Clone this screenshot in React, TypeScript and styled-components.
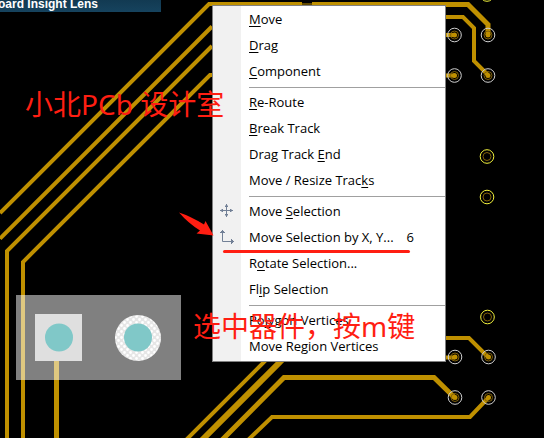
import React from "react";
import styled, { createGlobalStyle } from "styled-components";

const GlobalStyle = createGlobalStyle`
  * { box-sizing: border-box; }
  body { margin: 0; background: #000; overflow: hidden; }
`;

const TRACK = "#bf9000";
const RED = "#ff1e12";

const Workspace = styled.main`
  position: relative;
  min-height: 100vh;
  overflow: hidden;
  background: #000;
  font-family: "Open Sans", "Noto Sans", sans-serif;
`;

const BoardLayer = styled.svg`
  position: absolute;
  top: 0;
  left: 0;
  display: block;
`;

const LensTitle = styled.header`
  position: absolute;
  top: 0;
  left: 0;
  display: flex;
  align-items: center;
  justify-content: flex-end;
  width: 161px;
  height: 12px;
  padding: 0 63px 4px 0;
  background: linear-gradient(#123a52, #16435e);
  color: #fff;
  font: bold 12px/14px "Liberation Sans", Arial, sans-serif;
  white-space: nowrap;
`;

const Menu = styled.nav`
  position: absolute;
  top: 5px;
  left: 212px;
  width: 234px;
  padding: 1px 0;
  border: 1px solid #808080;
  background: linear-gradient(to right, #f1f1f1 28px, #fff 28px);
`;

const MenuRow = styled.button`
  display: grid;
  grid-template-columns: 28px 1fr auto;
  align-items: center;
  width: 100%;
  height: 26px;
  padding: 0 31px 2px 0;
  border: 0;
  background: transparent;
  color: #000;
  font: 13px/18px "Open Sans", "Noto Sans", sans-serif;
  text-align: left;
  white-space: nowrap;
`;

const IconCell = styled.span`
  display: flex;
  justify-content: center;
`;

const Label = styled.span`
  padding-left: 8px;
`;

const Mnemonic = styled.span`
  text-decoration: underline;
  text-decoration-thickness: 1px;
  text-underline-offset: 2px;
`;

const Divider = styled.hr`
  height: 1px;
  margin: 2px 0 2px 36px;
  border: 0;
  background: #a0a0a0;
`;

const Note = styled.p<{ $left: number; $top: number }>`
  position: absolute;
  left: ${(p) => p.$left}px;
  top: ${(p) => p.$top}px;
  margin: 0;
  color: ${RED};
  font: 28px/36px "Noto Sans", "Noto Sans CJK SC", sans-serif;
  white-space: nowrap;
`;

const MoveIcon = () => (
  <svg width="14" height="14" viewBox="0 0 14 14" fill="none" stroke="#728096" aria-hidden="true">
    <path d="M6.5 0V13M0 6.5H13M5 2.5H8M5 10.5H8M2.5 5V8M10.5 5V8M5.5 1.5H7.5M5.5 11.5H7.5M1.5 5.5V7.5M11.5 5.5V7.5" />
  </svg>
);

const OffsetIcon = () => (
  <svg width="14" height="14" viewBox="0 0 14 14" fill="none" stroke="#728096" aria-hidden="true">
    <path d="M2.5 0V11.5H14M0 2.5H5M1 1.5H4M11.5 9V14M12.5 10V13" />
  </svg>
);

type Item = { pre?: string; key?: string; post?: string; icon?: React.ReactNode; shortcut?: string };

const groups: Item[][] = [
  [
    { key: "M", post: "ove" },
    { key: "D", post: "rag" },
    { key: "C", post: "omponent" },
  ],
  [
    { key: "R", post: "e-Route" },
    { key: "B", post: "reak Track" },
    { pre: "Drag Track ", key: "E", post: "nd" },
    { pre: "Move / Resize Trac", key: "k", post: "s" },
  ],
  [
    { pre: "Move ", key: "S", post: "election", icon: <MoveIcon /> },
    { pre: "Move Selection by X, Y...", icon: <OffsetIcon />, shortcut: "6" },
    { pre: "R", key: "o", post: "tate Selection..." },
    { pre: "Fl", key: "i", post: "p Selection" },
  ],
  [{ pre: "Po", key: "l", post: "ygon Vertices" }, { pre: "Move Region Vertices" }],
];

const tracks: { d: string; w: number }[] = [
  { d: "M302 4H209L0 213", w: 4 },
  { d: "M212 26.5L0 238.5", w: 4 },
  { d: "M212 46L7 251V438", w: 4 },
  { d: "M214 75H210L23 262V438", w: 4 },
  { d: "M56.5 361V438", w: 5 },
  { d: "M312 4.5H468L488 24.5V35", w: 5 },
  { d: "M302 4H312", w: 1 },
  { d: "M440 17H463L474 28V61L488 75", w: 4 },
  { d: "M440 35H455M440 75.5H455M440 357.5H455", w: 4 },
  { d: "M440 338H469L488 357", w: 4 },
  { d: "M275 351L186 440", w: 4 },
  { d: "M291 351L202 440", w: 6 },
  { d: "M222 440L284 377.5H434L455 398", w: 5 },
  { d: "M248 440L272 417H470L488 398", w: 4 },
];

const vias: { x: number; y: number; joined?: boolean }[] = [
  { x: 454.5, y: 35, joined: true },
  { x: 488, y: 35, joined: true },
  { x: 454.5, y: 75.5, joined: true },
  { x: 488, y: 75.5, joined: true },
  { x: 455, y: 357, joined: true },
  { x: 488.5, y: 357, joined: true },
  { x: 455, y: 397.5, joined: true },
  { x: 488.5, y: 397.5, joined: true },
  { x: 487, y: -5.5 },
  { x: 487, y: 156.5 },
  { x: 487, y: 197 },
  { x: 487.5, y: 317 },
];

const Board = () => (
  <BoardLayer width="544" height="438" viewBox="0 0 544 438" aria-hidden="true">
    <defs>
      <pattern id="hatch" width="6" height="6" patternUnits="userSpaceOnUse">
        <rect width="6" height="6" fill="#e6e6e6" />
        <circle cx="1.5" cy="1.5" r="1.4" fill="#fff" />
        <circle cx="4.5" cy="4.5" r="1.4" fill="#fff" />
      </pattern>
    </defs>
    <g fill="none" stroke={TRACK}>
      {tracks.map((t) => (
        <path key={t.d} d={t.d} strokeWidth={t.w} />
      ))}
    </g>
    {vias.map((v) => (
      <g key={`${v.x}-${v.y}`} fill="none">
        {v.joined && <circle cx={v.x} cy={v.y} r="2.5" fill={TRACK} />}
        <circle cx={v.x} cy={v.y} r="4" stroke="#80600a" />
        <circle cx={v.x} cy={v.y} r="6.8" stroke={v.joined ? "#d0d0d0" : "#f2f23c"} />
      </g>
    ))}
    <rect x="35" y="314" width="47" height="47" fill="#bfbfbf" />
    <rect x="16" y="295" width="165" height="85" fill="#fff" fillOpacity="0.5" />
    <circle cx="59" cy="337.5" r="14" fill="#80c8c8" />
    <circle cx="138" cy="338" r="23" fill="url(#hatch)" />
    <circle cx="138" cy="337.5" r="14" fill="#80c8c8" />
  </BoardLayer>
);

export default function App() {
  return (
    <Workspace>
      <GlobalStyle />
      <Board />
      <LensTitle>Board Insight Lens</LensTitle>
      <Menu aria-label="Move">
        {groups.map((group, g) => (
          <React.Fragment key={g}>
            {g > 0 && <Divider />}
            {group.map((item, i) => (
              <MenuRow key={i} type="button">
                <IconCell>{item.icon}</IconCell>
                <Label>
                  {item.pre}
                  {item.key && <Mnemonic>{item.key}</Mnemonic>}
                  {item.post}
                </Label>
                {item.shortcut && <span>{item.shortcut}</span>}
              </MenuRow>
            ))}
          </React.Fragment>
        ))}
      </Menu>
      <BoardLayer width="544" height="438" viewBox="0 0 544 438" pointerEvents="none" aria-hidden="true">
        <path d="M224.5 251.5H408.5" stroke={RED} strokeWidth="3" strokeLinecap="round" />
        <path d="M179 212.5Q190 216 204 224.5L205.5 221L213.500 235.5L196.5 233.5L200 230.5Q188 223 179 212.5Z" fill={RED} />
      </BoardLayer>
      <Note $left={25} $top={86}>小北PCb 设计室</Note>
      <Note $left={193} $top={308}>选中器件，按m键</Note>
    </Workspace>
  );
}
